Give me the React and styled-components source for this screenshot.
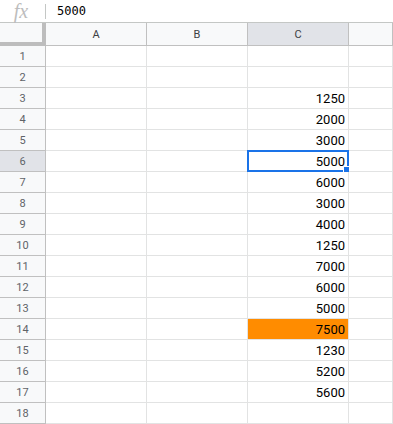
import styled, { createGlobalStyle } from "styled-components"

const Global = createGlobalStyle`
  body{
    margin: 0;
    background: #fff;
    font-family: Roboto, "Liberation Sans", Arial, sans-serif;
  }
`

const Sheet = styled.div`
  width: 393px;
  height: 424px;
  overflow: hidden;
  background: #fff;
`

const FormulaBar = styled.div`
  height: 22px;
  display: flex;
  align-items: center;
  border-bottom: 1px solid #c4c7c5;
`

const Fx = styled.div`
  width: 45px;
  display: flex;
  justify-content: center;
  font-family: "Liberation Serif", "DejaVu Serif", serif;
  font-style: italic;
  font-size: 20px;
  color: #bdbdbd;
  line-height: 22px;
  padding-right: 3px;
  box-sizing: border-box;
`

const Divider = styled.div`
  width: 1px;
  height: 15px;
  background: #c4c7c5;
`

const Value = styled.div`
  padding-left: 11px;
  font-family: "DejaVu Sans Mono", "Liberation Mono", monospace;
  font-size: 12px;
  color: #000;
`

const Row = styled.div`
  display: flex;
  height: ${p => p.$h}px;
`

const RowHead = styled.div`
  width: 45px;
  flex: none;
  border-right: 1px solid #c0c0c0;
  border-bottom: 1px solid #c0c0c0;
  background: ${p => p.$active ? "#e1e3e8" : "#f8f9fa"};
  color: #5f6368;
  font-size: 11px;
  display: flex;
  align-items: center;
  justify-content: center;
`

const Corner = styled.div`
  width: 42px;
  flex: none;
  border-right: 4px solid #bdbdbd;
  border-bottom: 4px solid #bdbdbd;
  background: #f8f9fa;
`

const ColHead = styled.div`
  width: ${p => p.$w ? p.$w + "px" : "auto"};
  flex: ${p => p.$w ? "none" : 1};
  box-sizing: border-box;
  border-right: 1px solid #c0c0c0;
  border-bottom: 1px solid #c0c0c0;
  background: ${p => p.$active ? "#e1e3e8" : "#f8f9fa"};
  color: #3c4043;
  font-size: 11px;
  display: flex;
  align-items: center;
  justify-content: center;
`

const Cell = styled.div`
  position: relative;
  width: ${p => p.$w ? p.$w + "px" : "auto"};
  flex: ${p => p.$w ? "none" : 1};
  border-right: 1px solid #e2e3e3;
  border-bottom: 1px solid #e2e3e3;
  background: ${p => p.$fill || "#fff"};
  font-size: 13px;
  color: #000;
  display: flex;
  align-items: center;
  justify-content: flex-end;
  padding-right: 3px;
  box-sizing: border-box;
`

const Selection = styled.div`
  position: absolute;
  left: -1px;
  top: -1px;
  right: -1px;
  bottom: -1px;
  border: 2px solid #1a73e8;
  pointer-events: none;
`

const Handle = styled.div`
  position: absolute;
  right: -4px;
  bottom: -4px;
  width: 6px;
  height: 6px;
  background: #1a73e8;
  border: 1px solid #fff;
`

const values = ["", "", "1250", "2000", "3000", "5000", "6000", "3000", "4000", "1250", "7000", "6000", "5000", "7500", "1230", "5200", "5600", ""]

export default function App(){
  return(
    <Sheet>
      <Global />
      <FormulaBar>
        <Fx>fx</Fx>
        <Divider />
        <Value>5000</Value>
      </FormulaBar>
      <Row $h={23}>
        <Corner />
        <ColHead $w={101}>A</ColHead>
        <ColHead $w={101}>B</ColHead>
        <ColHead $w={101} $active>C</ColHead>
        <ColHead />
      </Row>
      {values.map((v, i) => (
        <Row $h={21} key={i}>
          <RowHead $active={i === 5}>{i + 1}</RowHead>
          <Cell $w={101} />
          <Cell $w={101} />
          <Cell $w={101} $fill={i === 13 ? "#ff8c00" : null}>
            {v}
            {i === 5 && <Selection><Handle /></Selection>}
          </Cell>
          <Cell />
        </Row>
      ))}
    </Sheet>
  )
}
